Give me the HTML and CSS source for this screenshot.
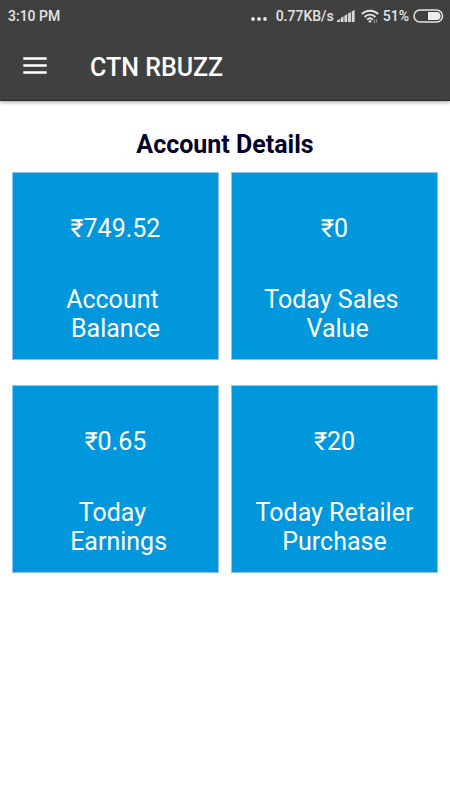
FILE: index.html
```html
<!DOCTYPE html>
<html lang="en">
<head>
<meta charset="utf-8">
<meta name="viewport" content="width=device-width, initial-scale=1">
<title>CTN RBUZZ</title>
<link rel="stylesheet" href="styles.css">
</head>
<body>
<div class="top">
  <div class="status">
    <span class="time">3:10 PM</span>
    <svg class="dots" width="16" height="6" viewBox="0 0 16 6" fill="#e4e4e4" aria-hidden="true"><circle cx="2" cy="3" r="1.9"/><circle cx="8" cy="3" r="1.9"/><circle cx="14" cy="3" r="1.9"/></svg>
    <span class="speed">0.77KB/s</span>
    <svg class="signal" width="18" height="14" viewBox="0 0 18 14" fill="#d8d8d8" aria-hidden="true"><path d="M0 11.500L2.800 10v3H0zM3.700 9L6.500 7.300V13H3.700zM7.400 6.800L10.200 5.200V13H7.400zM11.100 4.600L13.900 3V13h-2.800zM14.800 2.400L17.600.800V13h-2.800z"/></svg>
    <svg class="wifi" width="18" height="15" viewBox="0 0 18 15" fill="none" stroke="#e4e4e4" stroke-width="1.8" aria-hidden="true"><path d="M.8 5.2C5.3.6 12.7.6 17.200 5.200M3.500 8C6.500 4.900 11.500 4.900 14.500 8M6.100 10.600C7.800 9 10.200 9 11.900 10.600"/><path d="M7.200 11.900Q9 10.500 10.800 11.900L9 14z" fill="#e4e4e4" stroke="none"/><path d="M13.500 14v-3M15.500 10.500v3" stroke="#999" stroke-width="1"/></svg>
    <span class="percent">51%</span>
    <svg class="battery" width="31" height="14" viewBox="0 0 31 14" aria-hidden="true"><rect x="1" y="1" width="28.500" height="12" rx="6" fill="none" stroke="#e4e4e4" stroke-width="1.500"/><path d="M15 3h8.500a4 4 0 0 1 0 8H15z" fill="#eee"/></svg>
  </div>
  <header class="bar">
    <button class="menu" type="button" aria-label="Menu">
      <svg width="24" height="20" viewBox="0 0 24 20" fill="#fff" aria-hidden="true"><path d="M.3.300h23.400v2.500H.3zM.3 7.300h23.400v2.500H.3zM.3 14.300h23.400v2.500H.3z"/></svg>
    </button>
    <h1 class="title">CTN RBUZZ</h1>
  </header>
</div>
<main class="content">
  <h2 class="heading">Account Details</h2>
  <div class="cards">
    <section class="card"><p class="value">₹749.52</p><p class="label">Account&nbsp;<br>Balance</p></section>
    <section class="card"><p class="value">₹0</p><p class="label">Today Sales&nbsp;<br>&nbsp;Value</p></section>
    <section class="card"><p class="value">₹0.65</p><p class="label">Today&nbsp;<br>&nbsp;Earnings</p></section>
    <section class="card"><p class="value">₹20</p><p class="label">Today Retailer<br>Purchase</p></section>
  </div>
</main>
</body>
</html>
```
FILE: styles.css
```css
* {
  box-sizing: border-box;
}

body {
  margin: 0;
  background: #fff;
  font-family: Roboto, "Liberation Sans", sans-serif;
}

h1, h2, p {
  margin: 0;
}

.top {
  background: #404040;
  border-bottom: 1px solid #292929;
  box-shadow: 0 1px 4px rgba(0, 0, 0, 0.4);
}

.status {
  display: flex;
  align-items: center;
  height: 32px;
  padding: 0 6px 0 8px;
  color: #e4e4e4;
  font-size: 14px;
  font-weight: 500;
  line-height: 16px;
}

.dots {
  margin: 6px 9px 0 auto;
}

.signal {
  margin-left: 3px;
}

.wifi {
  margin: 0 4px 0 6px;
}

.battery {
  margin-left: 4px;
}

.bar {
  display: flex;
  align-items: center;
  gap: 43px;
  height: 68px;
  padding: 2px 23px 0;
}

.menu {
  display: flex;
  padding: 0;
  border: 0;
  background: none;
  cursor: pointer;
}

.title {
  color: #fff;
  font-size: 25px;
  font-weight: 500;
  line-height: 29px;
}

.content {
  padding: 29px 12px;
}

.heading {
  margin-bottom: 13px;
  color: #030129;
  font-size: 25px;
  font-weight: 700;
  line-height: 29px;
  text-align: center;
}

.cards {
  display: grid;
  grid-template-columns: 1fr 1fr;
  gap: 25px 12px;
}

.card {
  padding: 41px 0 16px;
  border: 1px solid #8cc4ec;
  background: #0097dc;
  color: #fff;
  font-size: 25px;
  line-height: 29px;
  text-align: center;
}

.value {
  margin-bottom: 42px;
}
```
